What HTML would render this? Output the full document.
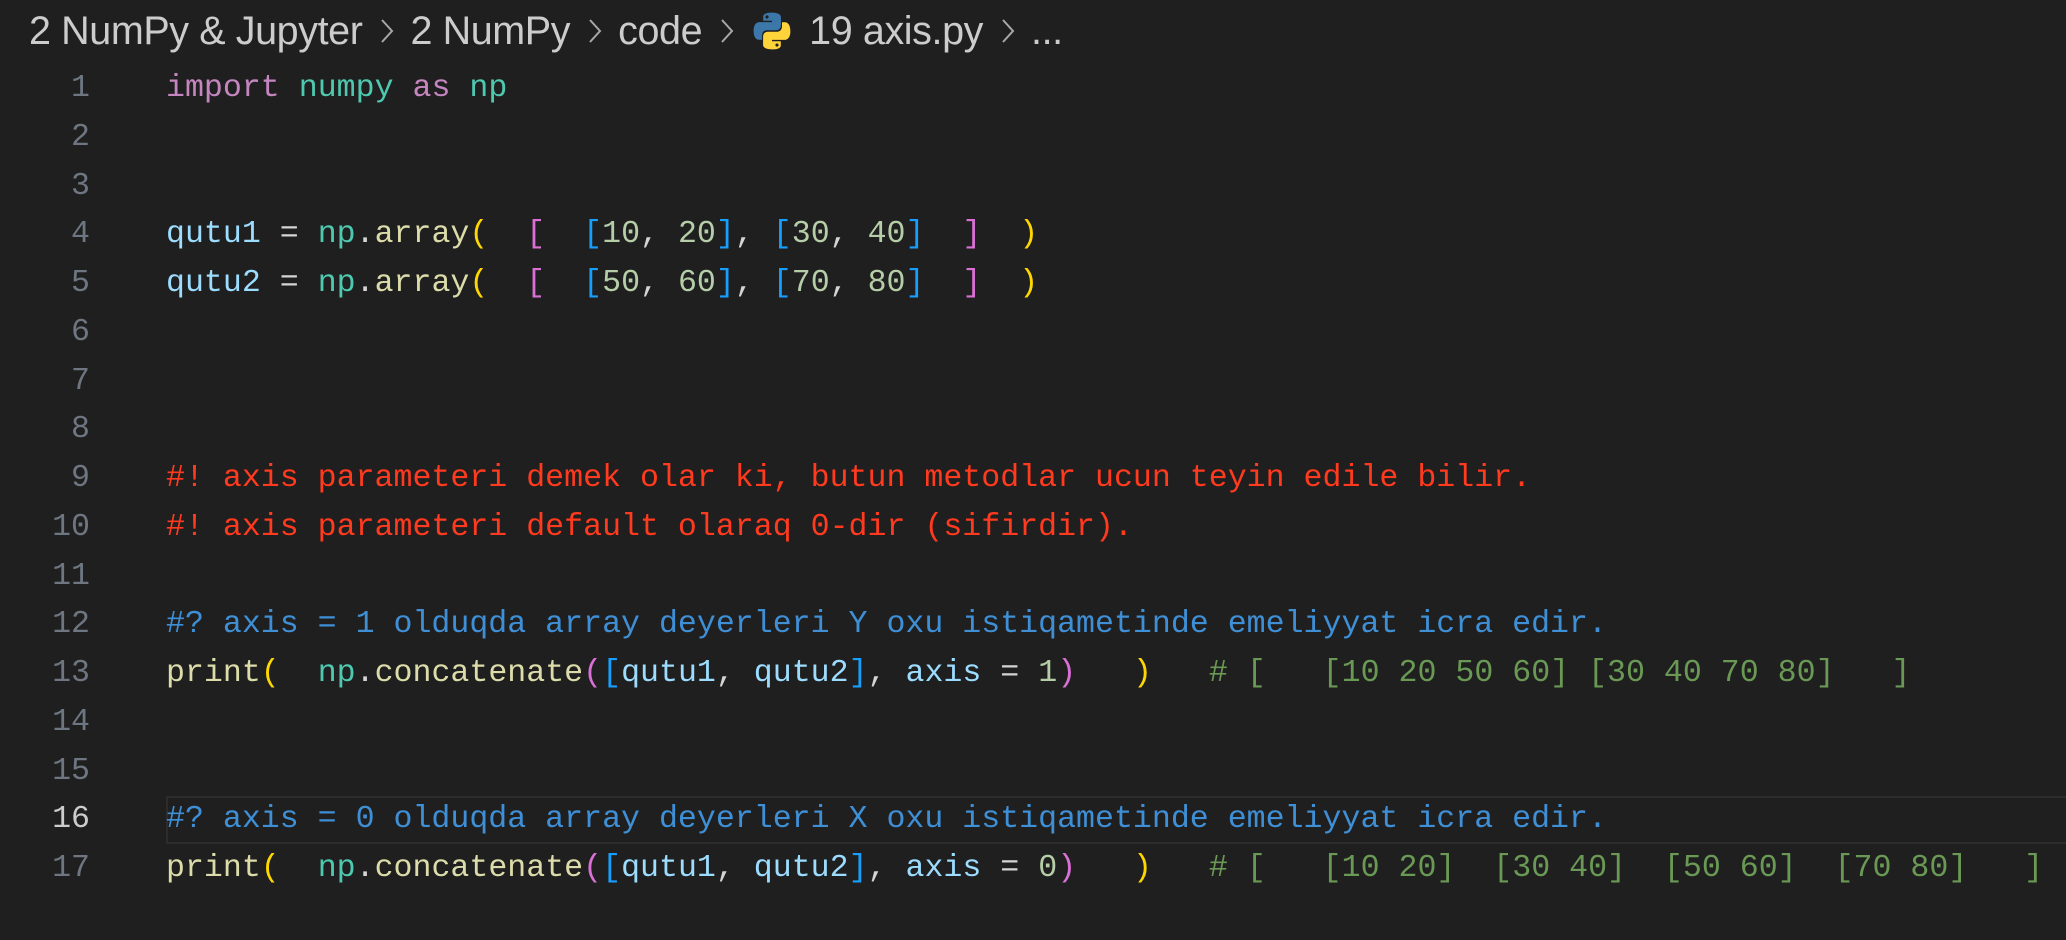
<!DOCTYPE html>
<html><head><meta charset="utf-8"><style>
html,body{margin:0;padding:0;background:#1f1f1f;width:2066px;height:940px;overflow:hidden}
.bc{position:absolute;left:29px;top:8px;height:46px;font-family:"Liberation Sans",sans-serif;font-size:39.5px;color:#cccccc;white-space:pre;display:flex;align-items:center;letter-spacing:-0.4px}
.sep{display:inline-block;width:48px;height:30px;text-align:center}
.ln{position:absolute;left:0;width:90px;text-align:right;font-family:"Liberation Mono",monospace;font-size:31.6px;color:#6e7681;line-height:48.75px}
.code{position:absolute;left:166px;font-family:"Liberation Mono",monospace;font-size:31.6px;line-height:48.75px;white-space:pre;color:#d4d4d4}
.k{color:#c586c0}.m{color:#4ec9b0}.v{color:#9cdcfe}.f{color:#dcdcaa}.n{color:#b5cea8}
.y{color:#ffd700}.p{color:#da70d6}.b{color:#179fff}.r{color:#ff3a1f}.q{color:#3f8fd6}.g{color:#6a9955}
.hl{position:absolute;left:166px;right:0;top:796px;height:44px;border:2px solid #2c2c2c;border-right:none}
</style></head><body>
<div class="bc">2 NumPy &amp; Jupyter<svg class="sep" viewBox="0 0 48 30"><path d="M20 4l10 11-10 11" stroke="#a8a8a8" stroke-width="2" fill="none"/></svg>2 NumPy<svg class="sep" viewBox="0 0 48 30"><path d="M20 4l10 11-10 11" stroke="#a8a8a8" stroke-width="2" fill="none"/></svg>code<svg class="sep" viewBox="0 0 48 30" style="margin-right:1px"><path d="M20 4l10 11-10 11" stroke="#a8a8a8" stroke-width="2" fill="none"/></svg><svg width="42" height="42" viewBox="0 0 32 32" style="margin-right:16px"><path d="M15.9 2c-7 0-6.6 3-6.6 3v3.2h6.7v1H6.6S2 8.7 2 15.8s4 6.9 4 6.9h2.4v-3.3s-.1-4 3.9-4h6.7s3.8.1 3.8-3.6V5.6S23.4 2 15.9 2zm-3.7 2.1a1.2 1.2 0 110 2.4 1.2 1.2 0 010-2.4z" fill="#3b77a8"/><path d="M16.1 30c7 0 6.6-3 6.6-3v-3.2H16v-1h9.4s4.6.5 4.6-6.6-4-6.9-4-6.9h-2.4v3.3s.1 4-3.9 4h-6.7s-3.8-.1-3.8 3.6v6.2S8.6 30 16.1 30zm3.7-2.1a1.2 1.2 0 110-2.4 1.2 1.2 0 010 2.4z" fill="#ffd43b"/></svg>19 axis.py<svg class="sep" viewBox="0 0 48 30"><path d="M20 4l10 11-10 11" stroke="#a8a8a8" stroke-width="2" fill="none"/></svg>...</div>
<div class="hl"></div>
<div class="ln" style="top:65px">1<br>2<br>3<br>4<br>5<br>6<br>7<br>8<br>9<br>10<br>11<br>12<br>13<br>14<br>15<br><span style="color:#cccccc">16</span><br>17</div>
<div class="code" style="top:65px"><span class="k">import</span> <span class="m">numpy</span> <span class="k">as</span> <span class="m">np</span>


<span class="v">qutu1</span> = <span class="m">np</span>.<span class="f">array</span><span class="y">(</span>  <span class="p">[</span>  <span class="b">[</span><span class="n">10</span>, <span class="n">20</span><span class="b">]</span>, <span class="b">[</span><span class="n">30</span>, <span class="n">40</span><span class="b">]</span>  <span class="p">]</span>  <span class="y">)</span>
<span class="v">qutu2</span> = <span class="m">np</span>.<span class="f">array</span><span class="y">(</span>  <span class="p">[</span>  <span class="b">[</span><span class="n">50</span>, <span class="n">60</span><span class="b">]</span>, <span class="b">[</span><span class="n">70</span>, <span class="n">80</span><span class="b">]</span>  <span class="p">]</span>  <span class="y">)</span>



<span class="r">#! axis parameteri demek olar ki, butun metodlar ucun teyin edile bilir.</span>
<span class="r">#! axis parameteri default olaraq 0-dir (sifirdir).</span>

<span class="q">#? axis = 1 olduqda array deyerleri Y oxu istiqametinde emeliyyat icra edir.</span>
<span class="f">print</span><span class="y">(</span>  <span class="m">np</span>.<span class="f">concatenate</span><span class="p">(</span><span class="b">[</span><span class="v">qutu1</span>, <span class="v">qutu2</span><span class="b">]</span>, <span class="v">axis</span> = <span class="n">1</span><span class="p">)</span>   <span class="y">)</span>   <span class="g"># [   [10 20 50 60] [30 40 70 80]   ]</span>


<span class="q">#? axis = 0 olduqda array deyerleri X oxu istiqametinde emeliyyat icra edir.</span>
<span class="f">print</span><span class="y">(</span>  <span class="m">np</span>.<span class="f">concatenate</span><span class="p">(</span><span class="b">[</span><span class="v">qutu1</span>, <span class="v">qutu2</span><span class="b">]</span>, <span class="v">axis</span> = <span class="n">0</span><span class="p">)</span>   <span class="y">)</span>   <span class="g"># [   [10 20]  [30 40]  [50 60]  [70 80]   ]</span></div>
</body></html>
